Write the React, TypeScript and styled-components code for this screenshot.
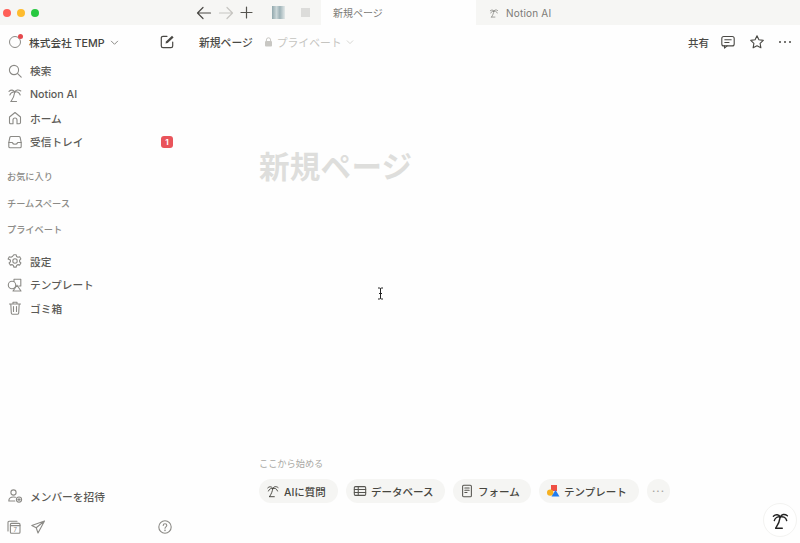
import React from "react";
import styled, { createGlobalStyle } from "styled-components";

const Global = createGlobalStyle`
  html, body { margin: 0; padding: 0; height: 100%; overflow: hidden; }
  body { background: #fefefe; font-family: Inter, "Noto Sans CJK JP", "Noto Sans", sans-serif; color: #4a4945; }
  #root { height: 100%; }
`;

const Shell = styled.div`
  position: relative; width: 800px; height: 543px;
  display: grid; grid-template-rows: 25px 1fr;
  overflow: hidden;
`;
const TabBar = styled.header`
  display: flex; align-items: center; background: #f6f6f4;
  padding-left: 3px;
`;
const Lights = styled.div`display: flex; gap: 6px; margin-right: 157px;`;
const Light = styled.span<{ $c: string }>`
  width: 8px; height: 8px; border-radius: 50%; background: ${p => p.$c};
`;
const NavIcons = styled.div`display: flex; align-items: center; gap: 6px; width: 125px; height: 100%;`;
const Thumb = styled.span`
  width: 13px; height: 13px; margin-left: 13px;
  background: linear-gradient(90deg, #7f9aa0 0%, #c4d2d4 35%, #8ea6ac 60%, #dfe6e6 100%);
  opacity: .85;
`;
const GreySq = styled.span`width: 9px; height: 9px; background: #dcdcda; margin-left: 10px;`;
const Tab = styled.div<{ $active?: boolean }>`
  height: 100%; width: 155px; box-sizing: border-box;
  display: flex; align-items: center; gap: 7px;
  padding-left: ${p => (p.$active ? 12 : 13)}px;
  background: ${p => (p.$active ? "#fefefe" : "transparent")};
  font-size: 10px; color: #7b7a76;
  letter-spacing: ${p => (p.$active ? "0" : ".2px")};
`;
const Body = styled.div`display: grid; grid-template-columns: 186px 1fr; min-height: 0;`;
const Sidebar = styled.aside`
  display: flex; flex-direction: column; padding: 6px 0 0 7px; box-sizing: border-box; min-height: 0;
`;
const Workspace = styled.div`
  display: flex; align-items: center; height: 22px; margin-bottom: 6px; padding-right: 11px;
  font-size: 10.7px; font-weight: 500; color: #45443f;
`;
const WsDot = styled.span`
  position: relative; width: 10px; height: 10px; border: 1.5px solid #8b8a86; border-radius: 50%;
  margin: 0 8px 0 2px; flex: none;
  &::after { content: ""; position: absolute; top: -3px; right: -3px; width: 5px; height: 5px; border-radius: 50%; background: #e5484d; }
`;
const Spring = styled.span`flex: 1;`;
const NavRow = styled.div`
  display: flex; align-items: center; height: 23.7px; font-size: 10.7px; font-weight: 500; color: #5b5a56; padding-right: 13px;
`;
const IconSlot = styled.span`
  width: 16px; height: 16px; margin-right: 7px; display: flex; align-items: center; justify-content: center; flex: none;
`;
const Badge = styled.span`
  background: #e9545b; color: #fff; font-size: 8px; font-weight: 700; width: 12px; height: 12px;
  border-radius: 3px; display: flex; align-items: center; justify-content: center;
`;
const SectionLabel = styled.div`
  height: 26.5px; display: flex; align-items: center; font-size: 9.2px; font-weight: 500; color: #8c8b87;
`;
const Labels = styled.div`margin: 9px 0 7px;`;
const Invite = styled(NavRow)`margin-top: auto; margin-bottom: 7px;`;
const BottomIcons = styled.div`
  display: flex; align-items: center; gap: 8px; height: 24px; padding-right: 13px; margin-bottom: 4px;
  margin-left: -1px;
`;
const Main = styled.main`display: flex; flex-direction: column; min-width: 0;`;
const PageBar = styled.div`
  display: flex; align-items: center; height: 22px; margin-top: 6px; padding: 0 8px 0 13px; flex: none;
`;
const Crumb = styled.span`font-size: 10.8px; font-weight: 500; color: #4a4945;`;
const Privacy = styled.span`
  display: flex; align-items: center; gap: 4px; margin-left: 11px; font-size: 10.8px; color: #c5c4c0;
`;
const Actions = styled.div`display: flex; align-items: center; gap: 13px;`;
const Share = styled.span`font-size: 10.5px; font-weight: 500; color: #4a4945; margin-right: -2px;`;
const Content = styled.div`flex: 1; display: flex; flex-direction: column; padding: 94px 0 0 73px; min-height: 0;`;
const Title = styled.h1`
  margin: 0; font-size: 30.6px; line-height: 40px; font-weight: 700; color: #dededc; letter-spacing: .2px;
`;
const Starter = styled.div`margin-top: auto; margin-bottom: 40px;`;
const StartLabel = styled.div`font-size: 9.2px; color: #a9a8a4; margin-bottom: 8px; line-height: 14px;`;
const Pills = styled.div`display: flex; align-items: center; gap: 8px;`;
const Pill = styled.div<{ $w: number }>`
  width: ${p => p.$w}px; height: 24px; box-sizing: border-box; border-radius: 12px; background: #f5f5f3;
  display: flex; align-items: center; gap: 4px; padding-left: 7px;
  font-size: 10.5px; font-weight: 500; color: #47463f;
`;
const More = styled(Pill)`color: #a5a4a0; letter-spacing: 1px; font-size: 11px; padding-left: 0; justify-content: center;`;
const Fab = styled.div`
  position: absolute; right: 3px; bottom: 6px; width: 34px; height: 34px; border-radius: 50%;
  border: 1px solid #f3f3f1; background: #fff; box-sizing: border-box;
  display: flex; align-items: center; justify-content: center;
`;
const Caret = styled.svg`position: absolute; left: 376px; top: 287px;`;

type IP = { s?: number; c?: string; w?: number };
const Svg: React.FC<IP & { children: React.ReactNode }> = ({ s = 16, c = "#8b8a86", w = 1.1, children }) => (
  <svg width={s} height={s} viewBox="0 0 16 16" fill="none" stroke={c} strokeWidth={w} strokeLinecap="round" strokeLinejoin="round">{children}</svg>
);
const Palm: React.FC<IP> = p => (
  <Svg {...p}>
    <path d="M4 14.5h5.5" />
    <path d="M4 14.5C6 11.5 7.4 8.5 7.8 5" />
    <path d="M7.8 5C6.6 2.8 4 2.4 2 4.4" />
    <path d="M7.8 5C6 4.6 3.6 5.6 2.8 8" />
    <path d="M7.8 5c1-2.2 3.6-2.8 6-1" />
    <path d="M7.8 5c2-.6 4.6 .2 5.4 3" />
  </Svg>
);
const Search = () => <Svg><circle cx="7" cy="7" r="4.6" /><path d="M10.4 10.4 14.2 14.2" /></Svg>;
const Home = () => <Svg><path d="M2.5 7 8 2.5 13.5 7v5.6c0 .8-.5 1.2-1.2 1.2H10V10a2 2 0 0 0-4 0v3.8H3.7c-.7 0-1.2-.4-1.2-1.2Z" /></Svg>;
const Inbox = () => <Svg><path d="M4 2.5h8c.5 0 .9.2 1.1.7l1.1 5.3v4c0 .8-.6 1.3-1.3 1.3H3.1c-.7 0-1.3-.5-1.3-1.3v-4l1.1-5.3c.2-.5.6-.7 1.1-.7Z" /><path d="M1.8 8.5h3.5c.4 1.2 1.4 1.8 2.7 1.8s2.3-.6 2.7-1.8h3.5" /></Svg>;
const Gear = () => <Svg><circle cx="8" cy="8" r="2.2" /><path d="M6.8 1.8h2.4l.4 1.7 1.4.8 1.7-.5 1.2 2.1-1.3 1.2v1.7l1.3 1.2-1.2 2.1-1.7-.5-1.4.8-.4 1.7H6.8l-.4-1.7-1.4-.8-1.7.5-1.2-2.1 1.3-1.2V7.1L1.1 5.9l1.2-2.1 1.7.5 1.4-.8Z" /></Svg>;
const Shapes = () => <Svg><path d="M7 4.4V2.2h6.8V9h-2" /><circle cx="5" cy="8" r="3.7" /><path d="M10 8.2 14 14H6Z" /></Svg>;
const Trash = () => <Svg><path d="M2.5 4h11M6 4V2.3h4V4M3.8 4l.5 9c0 .7.5 1.2 1.2 1.2h5c.7 0 1.2-.5 1.2-1.2l.5-9M6.5 6.5v5M9.5 6.5v5" /></Svg>;
const People = () => <Svg><circle cx="6.5" cy="4.5" r="2.6" /><path d="M1.8 13c0-2.6 2-4 4.7-4 .7 0 1.3.1 1.9.3M1.8 13h6" /><circle cx="12" cy="11.6" r="2.6" /><path d="M10.8 11.6h2.4M12 10.4v2.4" /></Svg>;
const Calendar = () => <Svg><path d="M2 12V3.2c0-.7.4-1 1-1h8" /><rect x="4.4" y="4.4" width="9.6" height="9.8" rx="1" /><path d="M4.4 6.6h9.6" /><text x="7.6" y="13" fontSize="6" stroke="none" fill="#8b8a86">7</text></Svg>;
const Plane = () => <Svg><path d="M14.5 2 1.8 6.5l4.4 2.3 1.8 5.2ZM14.5 2 6.2 8.8" /></Svg>;
const Help = () => <Svg><circle cx="8" cy="8" r="6.2" /><path d="M6.2 6.4c0-1 .8-1.7 1.8-1.7s1.8.6 1.8 1.6c0 1.5-1.8 1.5-1.8 3" /><circle cx="8" cy="11.3" r=".3" /></Svg>;
const Compose = () => <Svg c="#4a4945" w={1.2}><path d="M8 2.3H4c-1 0-1.7.7-1.7 1.7v8c0 1 .7 1.7 1.7 1.7h8c1 0 1.7-.7 1.7-1.7V8" /><path d="m6.5 9.6.5-2.2 6-5.6 1.6 1.6-6 5.7Z" fill="#4a4945" stroke="none" /></Svg>;
const Chevron: React.FC<{ c?: string; s?: number }> = ({ c = "#8b8a86", s = 9 }) => (
  <svg width={s} height={s} viewBox="0 0 10 10" fill="none" stroke={c} strokeWidth="1.1" strokeLinecap="round" strokeLinejoin="round"><path d="M1.5 3.5 5 7l3.5-3.5" /></svg>
);
const Arrow: React.FC<{ c: string; flip?: boolean }> = ({ c, flip }) => (
  <svg width="16" height="14" viewBox="0 0 16 14" fill="none" stroke={c} strokeWidth="1.2" strokeLinecap="round" strokeLinejoin="round" style={flip ? { transform: "scaleX(-1)" } : undefined}>
    <path d="M14.5 7H1.5M7 1.5 1.5 7 7 12.5" />
  </svg>
);
const Plus = () => (
  <svg width="13" height="13" viewBox="0 0 13 13" fill="none" stroke="#55544f" strokeWidth="1.2" strokeLinecap="round"><path d="M6.5 1v11M1 6.5h11" /></svg>
);
const Lock = () => (
  <svg width="9" height="10" viewBox="0 0 9 10"><path d="M2.4 4V2.9a2.1 2.1 0 0 1 4.2 0V4" fill="none" stroke="#c8c7c3" strokeWidth="1" /><rect x="1" y="4" width="7" height="5.5" rx="1" fill="#c8c7c3" /></svg>
);
const Comment = () => <Svg c="#4a4945" w={1.1}><rect x="1.8" y="2.5" width="12.4" height="9.4" rx="2" /><path d="M4.5 11.9v2.2l2.6-2.2M4.8 5.7h6.4M4.8 8.5h4.2" /></Svg>;
const Star = () => <Svg c="#4a4945" w={1.1}><path d="m8 1.8 1.9 4 4.4.6-3.2 3 .8 4.4L8 11.7l-3.9 2.1.8-4.4-3.2-3 4.4-.6Z" /></Svg>;
const Dots: React.FC = () => (
  <svg width="14" height="4" viewBox="0 0 14 4" fill="#4a4945"><circle cx="2" cy="2" r="1" /><circle cx="7" cy="2" r="1" /><circle cx="12" cy="2" r="1" /></svg>
);
const TableIc = () => <Svg s={14} c="#55544f" w={1.2}><rect x="1.5" y="3" width="13" height="10" rx="1.2" /><path d="M1.5 6.3h13M1.5 9.6h13M6 3v10" /></Svg>;
const FormIc = () => <Svg s={14} c="#55544f" w={1.2}><rect x="3" y="1.5" width="10" height="13" rx="1.2" /><path d="M5.5 4.6h5M5.5 7.2h5M5.5 9.8h2.5" /></Svg>;
const TemplateIc = () => (
  <svg width="14" height="14" viewBox="0 0 14 14">
    <rect x="5" y="1" width="6" height="6" fill="#ef4f43" />
    <circle cx="4.2" cy="8.6" r="3.2" fill="#f6b01f" />
    <path d="M9.5 6 13.5 12.5H5.5Z" fill="#1f7cf0" />
  </svg>
);
const IBeam = () => (
  <Caret width="9" height="13" viewBox="0 0 9 13" fill="none" stroke="#222" strokeWidth="1"><path d="M2 1h1.5c.6 0 1 .4 1 1v9c0 .6.4 1 1 1H7M7 1H5.5c-.6 0-1 .4-1 1M4.5 11c0 .6-.4 1-1 1H2M3 6.5h3" /></Caret>
);

export default function App() {
  return (
    <Shell>
      <Global />
      <TabBar>
        <Lights>
          <Light $c="#ff5f57" /><Light $c="#febc2e" /><Light $c="#28c840" />
        </Lights>
        <NavIcons>
          <Arrow c="#4a4945" /><Arrow c="#c6c5c1" flip /><Plus /><Thumb /><GreySq />
        </NavIcons>
        <Tab $active>新規ページ</Tab>
        <Tab><Palm s={10} c="#7b7a76" /> Notion AI</Tab>
      </TabBar>
      <Body>
        <Sidebar>
          <Workspace>
            <WsDot />株式会社 TEMP&nbsp;&nbsp;<Chevron /><Spring /><Compose />
          </Workspace>
          <NavRow><IconSlot><Search /></IconSlot>検索</NavRow>
          <NavRow><IconSlot><Palm /></IconSlot>Notion AI</NavRow>
          <NavRow><IconSlot><Home /></IconSlot>ホーム</NavRow>
          <NavRow><IconSlot><Inbox /></IconSlot>受信トレイ<Spring /><Badge>1</Badge></NavRow>
          <Labels>
            <SectionLabel>お気に入り</SectionLabel>
            <SectionLabel>チームスペース</SectionLabel>
            <SectionLabel>プライベート</SectionLabel>
          </Labels>
          <NavRow><IconSlot><Gear /></IconSlot>設定</NavRow>
          <NavRow><IconSlot><Shapes /></IconSlot>テンプレート</NavRow>
          <NavRow><IconSlot><Trash /></IconSlot>ゴミ箱</NavRow>
          <Invite><IconSlot><People /></IconSlot>メンバーを招待</Invite>
          <BottomIcons><Calendar /><Plane /><Spring /><Help /></BottomIcons>
        </Sidebar>
        <Main>
          <PageBar>
            <Crumb>新規ページ</Crumb>
            <Privacy><Lock />プライベート<Chevron c="#d2d1cd" s={8} /></Privacy>
            <Spring />
            <Actions>
              <Share>共有</Share><Comment /><Star /><Dots />
            </Actions>
          </PageBar>
          <Content>
            <Title>新規ページ</Title>
            <Starter>
              <StartLabel>ここから始める</StartLabel>
              <Pills>
                <Pill $w={79}><Palm s={14} c="#47463f" />AIに質問</Pill>
                <Pill $w={99}><TableIc />データベース</Pill>
                <Pill $w={78}><FormIc />フォーム</Pill>
                <Pill $w={100}><TemplateIc />テンプレート</Pill>
                <More $w={23}>···</More>
              </Pills>
            </Starter>
          </Content>
        </Main>
      </Body>
      <IBeam />
      <Fab><Palm s={19} c="#222" w={1.2} /></Fab>
    </Shell>
  );
}
